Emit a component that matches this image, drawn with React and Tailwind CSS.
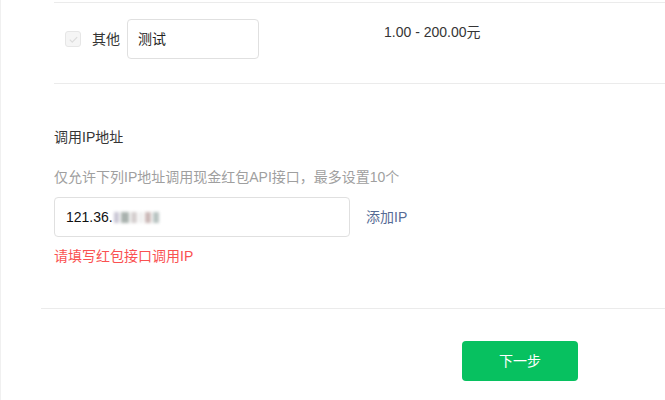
export default function App() {
  return (
    <div
      className="w-[665px] h-[400px] bg-white overflow-hidden border-l border-[#f0f0f0] text-[14px] text-[#353535]"
      style={{ fontFamily: '"Liberation Sans", "Noto Sans CJK SC", sans-serif' }}
    >
      {/* amount row */}
      <div className="ml-[53px] mt-[2px] border-t border-b border-[#ebebeb] h-[82px] flex items-start">
        <div className="flex items-center mt-[16px] ml-[11px]">
          <span className="w-[16px] h-[16px] rounded-[3px] border border-[#e6e6e6] bg-[#f5f5f5] flex items-center justify-center">
            <svg width="11" height="11" viewBox="0 0 12 12" fill="none">
              <path d="M2 6.2l2.6 2.6L10 3.4" stroke="#dcdcdc" strokeWidth="1.3" />
            </svg>
          </span>
          <span className="ml-[11px] mr-[7px]">其他</span>
          <div className="w-[132px] h-[40px] border border-[#e0e0e0] rounded-[4px] flex items-center pl-[10px] text-[#222]">
            测试
          </div>
        </div>
        <div className="ml-[125px] mt-[19px] leading-[20px]">1.00 - 200.00元</div>
      </div>

      {/* IP section */}
      <div className="ml-[53px] pt-[43px]">
        <div className="leading-[20px]">调用IP地址</div>
        <div className="mt-[20px] leading-[20px] text-[#9f9f9f]">
          仅允许下列IP地址调用现金红包API接口，最多设置10个
        </div>
        <div className="mt-[10px] flex items-center">
          <div className="w-[296px] h-[40px] border border-[#e0e0e0] rounded-[4px] flex items-center pl-[11px] text-[#111]">
            121.36.
            <span className="ml-[1px] flex items-center gap-[2px] blur-[1.5px]">
              <span className="w-[5px] h-[11px] bg-[#c9c6d4]" />
              <span className="w-[8px] h-[11px] bg-[#a9b2ae]" />
              <span className="w-[6px] h-[11px] bg-[#d5cfcf]" />
              <span className="w-[4px] h-[11px] bg-[#eeeeee]" />
              <span className="w-[6px] h-[11px] bg-[#cbb9b8]" />
              <span className="w-[6px] h-[11px] bg-[#b9c4c2]" />
            </span>
          </div>
          <span className="ml-[16px] text-[#576b95]">添加IP</span>
        </div>
        <div className="mt-[9px] leading-[20px] text-[#fa5151]">请填写红包接口调用IP</div>
      </div>

      {/* footer */}
      <div className="ml-[40px] mt-[42px] border-t border-[#ebebeb] flex justify-end pr-[87px] pt-[32px]">
        <button className="w-[116px] h-[40px] rounded-[4px] bg-[#07c160] text-white text-[14px]">
          下一步
        </button>
      </div>
    </div>
  )
}
